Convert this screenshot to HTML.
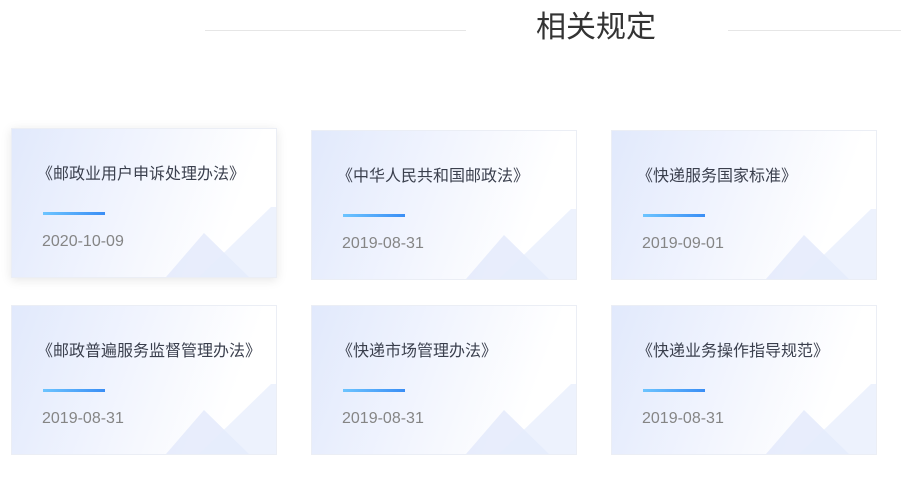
<!DOCTYPE html>
<html><head><meta charset="utf-8"><style>
body{margin:0;width:901px;height:478px;background:#fff;position:relative;overflow:hidden;font-family:"Liberation Sans","Noto Sans CJK SC",sans-serif}
.line{position:absolute;top:30px;height:1px;background:#e6e6e6}
.h{position:absolute;left:536px;top:8px;font-size:30px;color:#333;line-height:40px}
.card{position:absolute;width:264px;height:148px;border:1px solid #ebeef5;background:linear-gradient(110deg,#e1e9fc 0%,#f2f5fe 45%,#fff 80%);overflow:hidden}
.card.s{box-shadow:0 2px 10px rgba(0,0,0,0.1)}
.t{position:absolute;left:25px;top:31px;font-size:16px;color:#3a3f4d;white-space:nowrap}
.b{position:absolute;left:31px;top:83px;width:62px;height:3px;background:linear-gradient(90deg,#6cc4ff,#3a8ef5)}
.d{position:absolute;left:30px;top:104px;font-size:16px;color:#858585}
svg{position:absolute;right:0;bottom:0}
</style></head><body>
<div class="line" style="left:205px;width:261px"></div>
<div class="line" style="left:728px;width:173px"></div>
<div class="h">相关规定</div>
<div class="card s" style="left:11px;top:128px"><svg width="110" height="70"><polygon points="0,70 38,26 83,70" fill="#e2e8fb" opacity=".8"/><polygon points="33,70 105,0 110,0 110,70" fill="#e6ecfc" opacity=".7"/></svg><div class="t">《邮政业用户申诉处理办法》</div><div class="b"></div><div class="d">2020-10-09</div></div>
<div class="card" style="left:311px;top:130px"><svg width="110" height="70"><polygon points="0,70 38,26 83,70" fill="#e2e8fb" opacity=".8"/><polygon points="33,70 105,0 110,0 110,70" fill="#e6ecfc" opacity=".7"/></svg><div class="t">《中华人民共和国邮政法》</div><div class="b"></div><div class="d">2019-08-31</div></div>
<div class="card" style="left:611px;top:130px"><svg width="110" height="70"><polygon points="0,70 38,26 83,70" fill="#e2e8fb" opacity=".8"/><polygon points="33,70 105,0 110,0 110,70" fill="#e6ecfc" opacity=".7"/></svg><div class="t">《快递服务国家标准》</div><div class="b"></div><div class="d">2019-09-01</div></div>
<div class="card" style="left:11px;top:305px"><svg width="110" height="70"><polygon points="0,70 38,26 83,70" fill="#e2e8fb" opacity=".8"/><polygon points="33,70 105,0 110,0 110,70" fill="#e6ecfc" opacity=".7"/></svg><div class="t">《邮政普遍服务监督管理办法》</div><div class="b"></div><div class="d">2019-08-31</div></div>
<div class="card" style="left:311px;top:305px"><svg width="110" height="70"><polygon points="0,70 38,26 83,70" fill="#e2e8fb" opacity=".8"/><polygon points="33,70 105,0 110,0 110,70" fill="#e6ecfc" opacity=".7"/></svg><div class="t">《快递市场管理办法》</div><div class="b"></div><div class="d">2019-08-31</div></div>
<div class="card" style="left:611px;top:305px"><svg width="110" height="70"><polygon points="0,70 38,26 83,70" fill="#e2e8fb" opacity=".8"/><polygon points="33,70 105,0 110,0 110,70" fill="#e6ecfc" opacity=".7"/></svg><div class="t">《快递业务操作指导规范》</div><div class="b"></div><div class="d">2019-08-31</div></div>
</body></html>
